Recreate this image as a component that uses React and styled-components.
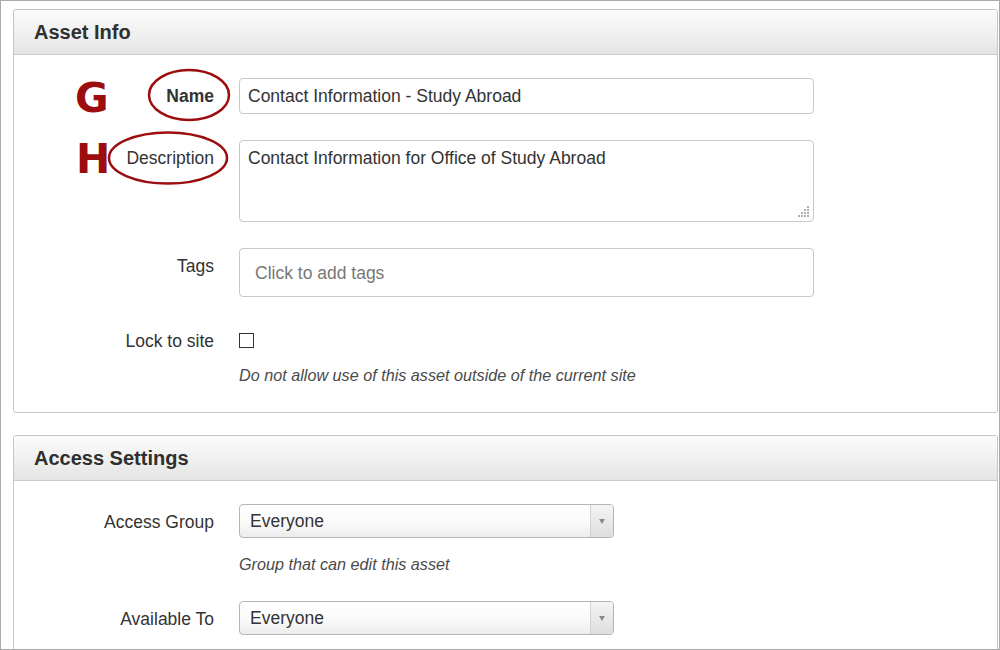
import React from "react";
import styled, { createGlobalStyle } from "styled-components";

const GlobalStyle = createGlobalStyle`
  html, body {
    margin: 0;
    padding: 0;
    background: #fff;
  }
  body {
    font-family: "Liberation Sans", Arial, sans-serif;
    color: #333;
  }
`;

const Frame = styled.div`
  width: 1000px;
  height: 650px;
  box-sizing: border-box;
  border: 1px solid #a9a9a9;
  padding: 8px 1px 0 12px;
  overflow: hidden;
  display: flex;
  flex-direction: column;
  gap: 22px;
`;

const Panel = styled.section`
  position: relative;
  border: 1px solid #c6c6c6;
  border-radius: 3px;
  background: #fff;
  flex-shrink: 0;
`;

const PanelHeader = styled.header`
  height: 44px;
  display: flex;
  align-items: center;
  padding-left: 20px;
  background: linear-gradient(to bottom, #fbfbfb 0%, #f1f1f1 50%, #e4e4e4 100%);
  border-bottom: 1px solid #c9c9c9;
  border-radius: 3px 3px 0 0;
`;

const PanelTitle = styled.h2`
  margin: 0;
  font-size: 20px;
  font-weight: 700;
  color: #2f2f2f;
`;

const PanelBody = styled.div`
  padding: 23px 0 26px;
  display: flex;
  flex-direction: column;
  gap: 26px;
`;

const Row = styled.div`
  display: grid;
  grid-template-columns: 200px 575px;
  column-gap: 25px;
  align-items: start;
`;

const Label = styled.div`
  text-align: right;
  font-size: 17.5px;
  line-height: 36px;
  font-weight: ${(p) => (p.$bold ? 700 : 400)};
  color: #333;
`;

const Field = styled.div`
  display: flex;
  flex-direction: column;
`;

const TextBox = styled.div`
  position: relative;
  box-sizing: border-box;
  height: ${(p) => p.$h}px;
  border: 1px solid #c8c8c8;
  border-radius: 4px;
  padding: ${(p) => (p.$placeholder ? "0 15px" : "7px 8px")};
  display: flex;
  align-items: ${(p) => (p.$top ? "flex-start" : "center")};
  font-size: 17.5px;
  line-height: 20px;
  color: ${(p) => (p.$placeholder ? "#777" : "#333")};
  background: #fff;
`;

const Grip = styled.svg`
  position: absolute;
  right: 3px;
  bottom: 3px;
`;

const CheckWrap = styled.div`
  height: 26px;
  padding-top: 10px;
  box-sizing: border-box;
`;

const CheckBox = styled.span`
  display: block;
  width: 13px;
  height: 13px;
  border: 1px solid #333;
  background: #fff;
`;

const Help = styled.div`
  margin-top: 15px;
  font-size: 16.2px;
  line-height: 22px;
  font-style: italic;
  color: #4a4a4a;
`;

const Select = styled.div`
  width: 375px;
  height: 34px;
  box-sizing: border-box;
  border: 1px solid #b5b5b5;
  border-radius: 4px;
  display: flex;
  background: linear-gradient(to bottom, #ffffff 0%, #fafafa 55%, #ececec 100%);
  overflow: hidden;
`;

const SelectValue = styled.div`
  flex: 1;
  display: flex;
  align-items: center;
  padding-left: 10px;
  font-size: 17.5px;
  color: #333;
`;

const SelectArrow = styled.div`
  width: 22px;
  display: flex;
  align-items: center;
  justify-content: center;
  border-left: 1px solid #d0d0d0;
  background: linear-gradient(to bottom, #f4f4f4 0%, #dedede 100%);

  &::after {
    content: "";
    border-left: 3.5px solid transparent;
    border-right: 3.5px solid transparent;
    border-top: 5px solid #8a8a8a;
  }
`;

const Marker = styled.span`
  position: absolute;
  left: ${(p) => p.$x}px;
  top: ${(p) => p.$y}px;
  font-family: "DejaVu Sans", sans-serif;
  font-weight: 700;
  font-size: 41px;
  line-height: 1;
  color: #9c0d10;
`;

const Circles = styled.svg`
  position: absolute;
  left: 0;
  top: 0;
  pointer-events: none;
`;

const ResizeGrip = () => (
  <Grip width="12" height="12" viewBox="0 0 12 12">
    {[
      [9, 0],
      [6, 3],
      [9, 3],
      [3, 6],
      [6, 6],
      [9, 6],
      [0, 9],
      [3, 9],
      [6, 9],
      [9, 9],
    ].map(([x, y]) => (
      <rect key={`${x}-${y}`} x={x} y={y} width="2" height="2" fill="#b0b0b0" />
    ))}
  </Grip>
);

const SelectBox = ({ value }) => (
  <Select>
    <SelectValue>{value}</SelectValue>
    <SelectArrow />
  </Select>
);

export default function App() {
  return (
    <>
      <GlobalStyle />
      <Frame>
        <Panel>
          <PanelHeader>
            <PanelTitle>Asset Info</PanelTitle>
          </PanelHeader>
          <PanelBody>
            <Row>
              <Label $bold>Name</Label>
              <TextBox $h={36}>Contact Information - Study Abroad</TextBox>
            </Row>
            <Row>
              <Label>Description</Label>
              <TextBox $h={82} $top>
                Contact Information for Office of Study Abroad
                <ResizeGrip />
              </TextBox>
            </Row>
            <Row>
              <Label>Tags</Label>
              <TextBox $h={49} $placeholder>
                Click to add tags
              </TextBox>
            </Row>
            <Row>
              <Label>Lock to site</Label>
              <Field>
                <CheckWrap>
                  <CheckBox />
                </CheckWrap>
                <Help>Do not allow use of this asset outside of the current site</Help>
              </Field>
            </Row>
          </PanelBody>

          <Marker $x={61} $y={68}>G</Marker>
          <Marker $x={62} $y={129}>H</Marker>
          <Circles width="240" height="200">
            <ellipse cx="175" cy="85" rx="40" ry="25" fill="none" stroke="#9c0d10" strokeWidth="2.5" />
            <ellipse cx="154" cy="148" rx="59" ry="25.5" fill="none" stroke="#9c0d10" strokeWidth="2.5" />
          </Circles>
        </Panel>

        <Panel>
          <PanelHeader>
            <PanelTitle>Access Settings</PanelTitle>
          </PanelHeader>
          <PanelBody>
            <Row>
              <Label>Access Group</Label>
              <Field>
                <SelectBox value="Everyone" />
                <Help>Group that can edit this asset</Help>
              </Field>
            </Row>
            <Row>
              <Label>Available To</Label>
              <Field>
                <SelectBox value="Everyone" />
              </Field>
            </Row>
          </PanelBody>
        </Panel>
      </Frame>
    </>
  );
}
